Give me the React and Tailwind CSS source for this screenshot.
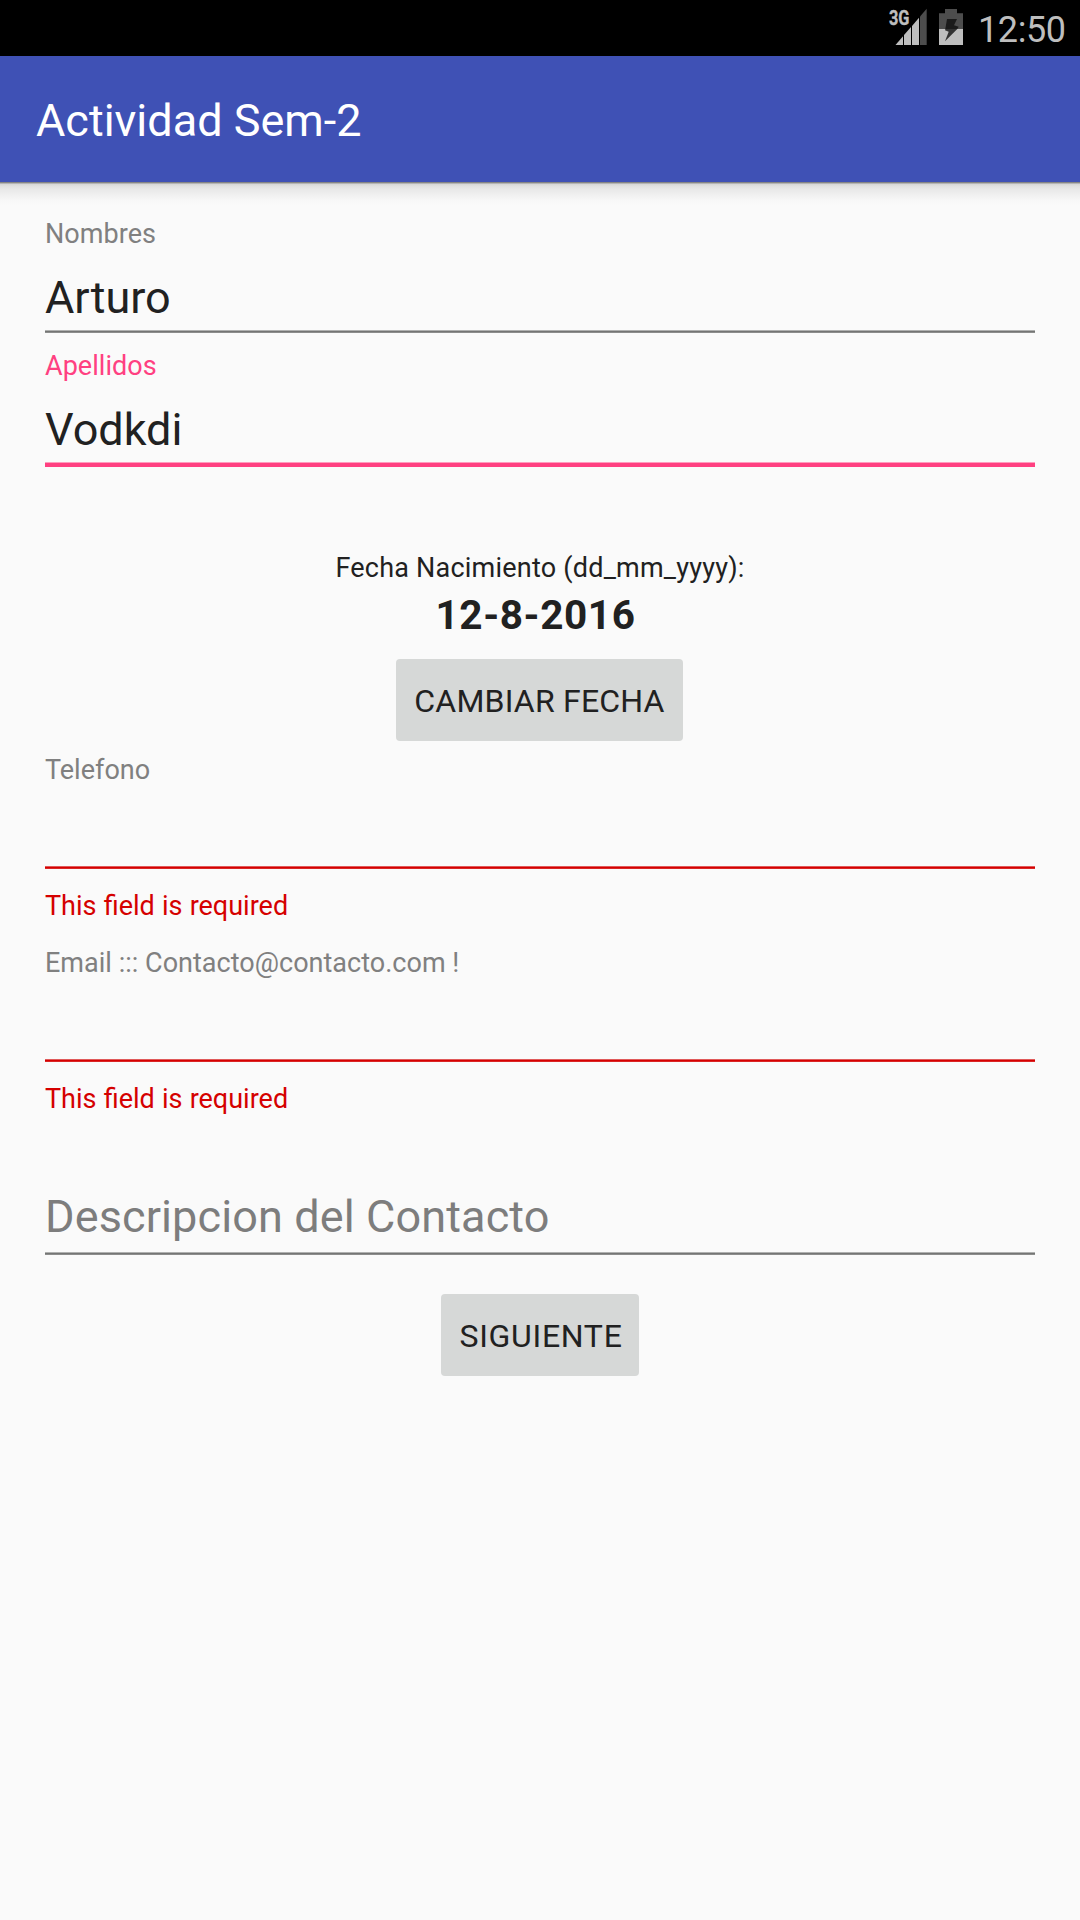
import React from "react";

function StatusBar() {
  return (
    <div className="flex h-[56px] items-start justify-end bg-black pr-[14px] text-[#bebebe]">
      <svg className="mt-[4px] h-[48px] w-[40px]" viewBox="888 4 40 48" fill="#bebebe">
        <text x="889" y="25.3" fontSize="20.5" fontWeight="700" stroke="#bebebe" strokeWidth="0.4" textLength="20.5" lengthAdjust="spacingAndGlyphs" fontFamily="Roboto, sans-serif">3G</text>
        <path d="M895.5 45 L903 36.3 V45 Z" />
        <path d="M904 45 V35.1 L911 27 V45 Z" />
        <path d="M912 45 V25.9 L919 17.8 V45 Z" />
        <path d="M920 45 V16.6 L926.7 8.8 V45 Z" fill="#4d4d4d" />
      </svg>
      <svg className="mt-[4px] ml-[8px] h-[48px] w-[30px]" viewBox="936 4 30 48">
        <path d="M939 29 V13.3 H945 V9 H957 V13.3 H963 V29 Z" fill="#4d4d4d" />
        <path d="M939 29 H963 V45 H939 Z" fill="#bebebe" />
        <path d="M947 19 H957 L954 25.3 L958.7 26.8 L957.3 29 H945.3 Z" fill="#1b1b1b" />
        <path d="M945.3 29 H957.3 L945 41.3 L948.7 31.7 L945 30.3 Z" fill="#333333" />
      </svg>
      <span className="mt-[9px] ml-[12px] w-[88px] text-[36px] leading-[42px] tracking-[-0.4px] whitespace-nowrap">12:50</span>
    </div>
  );
}

function Underline({ tone }) {
  if (tone === "focus") {
    return (
      <div className="mt-[6px]">
        <div className="h-px bg-[#ff9dbd]" />
        <div className="h-[4px] bg-[#ff4081]" />
      </div>
    );
  }
  if (tone === "error") {
    return (
      <div className="mt-[6px]">
        <div className="h-px bg-[#e05a5a]" />
        <div className="h-px bg-[#d50000]" />
        <div className="h-px bg-[#da2525]" />
      </div>
    );
  }
  return (
    <div className="mt-[6px]">
      <div className="h-px bg-[#b0b1b0]" />
      <div className="h-px bg-[#747574]" />
      <div className="h-px bg-[#8c8d8c]" />
    </div>
  );
}

function Field({ label, labelClass, value, tone, error }) {
  return (
    <div>
      <div className={`text-[27px] leading-[32px] ${labelClass}`}>{label}</div>
      <div className="mt-[21px] h-[53px] text-[45px] leading-[53px] text-[#212121]">{value}</div>
      <Underline tone={tone} />
      {error && <div className="mt-[21px] text-[27px] leading-[32px] text-[#d50000] [word-spacing:0.5px]">{error}</div>}
    </div>
  );
}

function Button({ className, children }) {
  return (
    <button className={`flex h-[82px] items-start justify-center rounded-[4px] bg-[#d6d8d7] pt-[23px] text-[32px] leading-[38px] whitespace-nowrap text-[#212121] ${className}`}>
      {children}
    </button>
  );
}

export default function App() {
  return (
    <div className="flex h-[1920px] w-[1080px] flex-col overflow-hidden bg-[#fafafa] font-['Roboto',sans-serif]">
      <StatusBar />
      <header className="h-[126px] bg-[#3f51b5] pt-[38px] pl-[36px] text-[45px] leading-[53px] text-white">
        Actividad Sem-2
      </header>
      <div className="h-[24px] bg-[linear-gradient(to_bottom,#858585_0px,#858585_1px,#b4b4b4_1px,#b4b4b4_2px,#d6d6d6_2px,#e0e0e0_4px,#e8e8e8_7px,#f0f0f0_13px,#f8f8f8_19px,#fafafa_24px)]" />
      <main className="flex flex-col px-[45px] pt-[12px]">
        <Field label="Nombres" labelClass="text-[#808080] tracking-[0.05px]" value="Arturo" />
        <div className="mt-[17px]">
          <Field label="Apellidos" labelClass="text-[#ff4081] tracking-[0.05px]" value="Vodkdi" tone="focus" />
        </div>
        <div className="mt-[85px] flex flex-col items-center text-[#212121]">
          <div className="text-[27px] leading-[32px] tracking-[0.22px]">Fecha Nacimiento (dd_mm_yyyy):</div>
          <div className="mt-[7px] pr-[9px] text-[40.5px] leading-[48px] font-bold tracking-[0.6px]">12-8-2016</div>
          <Button className="mt-[20px] mr-px w-[287px] tracking-[0.2px]">CAMBIAR FECHA</Button>
        </div>
        <div className="mt-[13px]">
          <Field label="Telefono" labelClass="text-[#808080]" tone="error" error="This field is required" />
        </div>
        <div className="mt-[25px]">
          <Field label="Email ::: Contacto@contacto.com !" labelClass="text-[#808080] tracking-[0.02px]" tone="error" error="This field is required" />
        </div>
        <div className="mt-[75px]">
          <div className="pb-[3px] text-[45px] leading-[53px] tracking-[0.12px] text-[#7d7d7d]">Descripcion del Contacto</div>
          <Underline />
        </div>
        <Button className="mt-[39px] w-[198px] self-center pl-[8px] pr-[6px] tracking-[0.7px]">SIGUIENTE</Button>
      </main>
    </div>
  );
}
